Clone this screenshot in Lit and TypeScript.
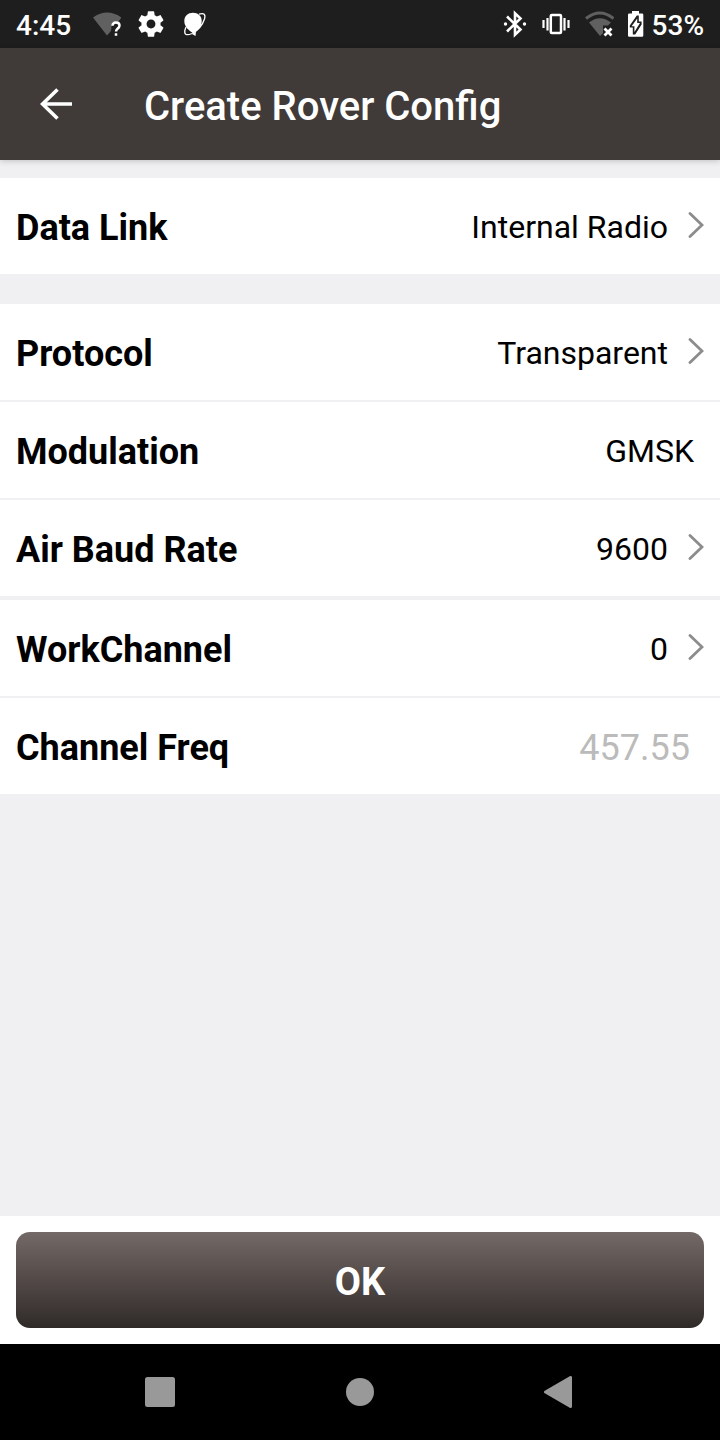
import { LitElement, html, css, svg, nothing } from "lit";
import { customElement, state } from "lit/decorators.js";

interface Setting {
  label: string;
  value: string;
  link: boolean;
}

const protocolSettings: Setting[] = [
  { label: "Protocol", value: "Transparent", link: true },
  { label: "Modulation", value: "GMSK", link: false },
  { label: "Air Baud Rate", value: "9600", link: true },
];

@customElement("status-bar")
export class StatusBar extends LitElement {
  static styles = css`
    :host {
      display: flex;
      justify-content: space-between;
      align-items: center;
      height: 48px;
      padding: 0 16px;
      background: #1e1e1e;
      color: #fff;
      font-size: 28px;
      line-height: 32px;
      font-weight: 500;
    }
    .group {
      display: flex;
      align-items: center;
      gap: 16px;
    }
    .group.system {
      gap: 14px;
    }
    .time {
      padding: 4px 6px 0 0;
    }
    .battery {
      display: flex;
      align-items: center;
      gap: 8px;
    }
    .percent {
      padding-top: 4px;
    }
    svg {
      display: block;
      flex: none;
    }
  `;

  render() {
    return html`
      <div class="group">
        <span class="time">4:45</span>
        <svg width="28" height="28" viewBox="0 0 28 28" aria-hidden="true">
          <path d="M0 7.5Q14-2.5 28.5 7.5L25 12H19L18 21L14 25.500Z" fill="#606060" />
          <path d="M19.500 15.800Q19.500 12.500 23 12.500T26.500 15.500C26.500 18.500 23 18.500 23 21.500M23 23.200V25.800" fill="none" stroke="#fff" stroke-width="2.500" />
        </svg>
        <svg width="28" height="28" viewBox="1 1 22 22" aria-hidden="true">
          <path fill="#fff" d="M19.430 12.980c.04-.32.07-.64.07-.98s-.03-.66-.07-.98l2.110-1.650c.19-.15.24-.42.12-.64l-2-3.460c-.12-.22-.39-.3-.61-.22l-2.490 1c-.52-.4-1.080-.73-1.690-.98l-.38-2.650C14.460 2.180 14.250 2 14 2h-4c-.25 0-.46.18-.49.42l-.38 2.650c-.61.25-1.170.59-1.690.98l-2.490-1c-.23-.09-.49 0-.61.22l-2 3.460c-.13.22-.07.49.12.64l2.110 1.650c-.04.32-.07.65-.07.98s.03.66.07.98l-2.110 1.650c-.19.15-.24.42-.12.64l2 3.460c.12.22.39.3.61.22l2.490-1c.52.4 1.080.73 1.690.98l.38 2.650c.03.24.24.42.49.42h4c.25 0 .46-.18.49-.42l.38-2.650c.61-.25 1.170-.59 1.690-.98l2.490 1c.23.09.49 0 .61-.22l2-3.460c.12-.22.07-.49-.12-.64l-2.110-1.650zM12 15.500c-1.930 0-3.500-1.570-3.500-3.500s1.570-3.500 3.500-3.500 3.500 1.570 3.500 3.500-1.570 3.500-3.500 3.500z" />
        </svg>
        <svg width="28" height="28" viewBox="0 0 28 28" aria-hidden="true">
          <path fill="#fff" d="M3.300 11C3.300 6 7 2.800 12 2.800S20.700 6 20.700 11C20.700 16.500 17 20 12.500 23.500C8 20.500 3.300 17 3.300 11Z" />
          <path fill="none" stroke="#fff" stroke-width="1.300" d="M18 4.200Q25.500 2 23.500 9C21.500 15 17 20.500 11 23.500Q3 27 3.800 20.500L5 17" />
          <path fill="#fff" d="M11 24L15 21.500L14.500 26Z" />
        </svg>
      </div>
      <div class="group system">
        <svg width="28" height="28" viewBox="0 0 28 28" aria-hidden="true">
          <path fill="none" stroke="#fff" stroke-width="2.600" d="M7 6.500L20.500 19.500L15 24.800V3.200L20.500 8.500L7 21.500" />
          <circle cx="5.500" cy="14" r="1.700" fill="#fff" />
          <circle cx="24.500" cy="14" r="1.700" fill="#fff" />
        </svg>
        <svg width="28" height="28" viewBox="0 0 28 28" aria-hidden="true">
          <rect x="8.800" y="5" width="10.200" height="18" rx="1" fill="none" stroke="#fff" stroke-width="2.500" />
          <path stroke="#fff" stroke-width="2.200" d="M1.500 10V18M5.500 8V20.500M22.500 8V20.500M26.500 10V18" />
        </svg>
        <svg width="30" height="28" viewBox="0 0 30 28" aria-hidden="true">
          <path fill="none" stroke="#606060" stroke-width="3" d="M2 8.500Q16-2.500 29.500 8.500" />
          <path fill="#606060" d="M5 12.500Q16 4 27 12.500L24 15.500H19V23L16 26Z" />
          <path stroke="#fff" stroke-width="2.800" d="M20.500 18.500L27.500 25.500M27.500 18.500L20.500 25.500" />
        </svg>
        <span class="battery">
          <svg width="16" height="28" viewBox="0 0 16 28" aria-hidden="true">
            <path fill="#fff" d="M4 1H11V3.500H14Q15.300 3.500 15.300 4.800V25.500Q15.300 26.800 14 26.800H1.300Q0 26.800 0 25.500V4.800Q0 3.500 1.300 3.500H4Z" />
            <path fill="#1e1e1e" d="M8.800 5.500H10.800V11.500H13.600V14.500L7.200 24.500H4.800V17.500H1.800V15.500Z" />
            <path fill="#fff" d="M9.200 8.500V13H12L6.400 22V16.300H3.600Z" />
          </svg>
          <span class="percent">53%</span>
        </span>
      </div>
    `;
  }
}

@customElement("nav-bar")
export class NavBar extends LitElement {
  static styles = css`
    :host {
      display: flex;
      justify-content: center;
      height: 96px;
      padding: 0 60px;
      background: #000;
    }
    .key {
      flex: 1;
      display: flex;
      align-items: center;
      justify-content: center;
      padding: 0;
      border: 0;
      background: none;
    }
  `;

  render() {
    return html`
      <button class="key" aria-label="Recent apps">
        <svg width="32" height="32" viewBox="0 0 32 32"><rect x="1" y="1" width="30" height="30" rx="2.500" fill="#999" /></svg>
      </button>
      <button class="key" aria-label="Home">
        <svg width="32" height="32" viewBox="0 0 32 32"><circle cx="16" cy="16" r="14" fill="#999" /></svg>
      </button>
      <button class="key" aria-label="Back">
        <svg width="32" height="32" viewBox="0 0 32 32"><path d="M1.500 16L26.500 1.500V30.500Z" fill="#999" stroke="#999" stroke-width="3" stroke-linejoin="round" /></svg>
      </button>
    `;
  }
}

@customElement("app-root")
export class AppRoot extends LitElement {
  static styles = css`
    :host {
      display: flex;
      flex-direction: column;
      min-height: 100vh;
      background: #f0f0f3;
      color: #000;
      font-family: Roboto, "Noto Sans", sans-serif;
    }
    .toolbar {
      display: flex;
      align-items: center;
      height: 112px;
      background: #403a38;
      color: #fff;
      box-shadow: 0 1px 6px rgba(0, 0, 0, 0.2);
    }
    .back {
      display: flex;
      align-items: center;
      justify-content: center;
      width: 112px;
      height: 112px;
      padding: 0;
      border: 0;
      background: none;
      color: inherit;
    }
    .title {
      margin: 0;
      padding: 6px 0 0 32px;
      font-size: 40px;
      line-height: 48px;
      font-weight: 500;
    }
    .settings {
      flex: 1;
      padding-top: 18px;
    }
    .section {
      display: flex;
      flex-direction: column;
      gap: 2px;
    }
    .section.spaced {
      margin-top: 30px;
    }
    .section.joined {
      margin-top: 4px;
    }
    .row {
      box-sizing: border-box;
      display: flex;
      align-items: center;
      justify-content: space-between;
      gap: 20px;
      width: 100%;
      height: 96px;
      padding: 0 16px;
      border: 0;
      background: #fff;
      color: inherit;
      font: inherit;
      text-align: left;
    }
    .label {
      padding-top: 4px;
      font-size: 36px;
      line-height: 44px;
      font-weight: 700;
    }
    .value {
      display: flex;
      align-items: center;
      gap: 20px;
      font-size: 32px;
      line-height: 40px;
    }
    .text {
      padding-top: 2px;
    }
    .row.plain .value {
      padding-right: 10px;
    }
    .chevron {
      display: block;
      padding-bottom: 2px;
    }
    .field {
      flex: 1;
      min-width: 0;
      height: 48px;
      padding: 4px 14px 0 0;
      border: 0;
      background: none;
      color: #bbb;
      font: inherit;
      font-size: 36px;
      line-height: 44px;
      text-align: right;
    }
    .footer {
      padding: 16px;
      background: #fff;
    }
    .ok {
      display: block;
      width: 100%;
      height: 96px;
      padding: 4px 0 0;
      border: 0;
      border-radius: 14px;
      background: linear-gradient(#736a68, #564d4b 45%, #2f2a28);
      color: #fff;
      font: inherit;
      font-size: 38px;
      font-weight: 700;
    }
  `;

  @state() private frequency = "457.55";

  private row({ label, value, link }: Setting) {
    const content = html`
      <span class="label">${label}</span>
      <span class="value">
        <span class="text">${value}</span>
        ${link
          ? html`<svg class="chevron" width="16" height="26" viewBox="0 0 16 26" aria-hidden="true">
              ${svg`<path d="M2 1.500L14 13L2 24.500" fill="none" stroke="#8c8c8c" stroke-width="2.800" stroke-linecap="round" />`}
            </svg>`
          : nothing}
      </span>
    `;
    return link
      ? html`<button class="row">${content}</button>`
      : html`<div class="row plain">${content}</div>`;
  }

  render() {
    return html`
      <status-bar></status-bar>
      <header class="toolbar">
        <button class="back" aria-label="Back">
          <svg width="32" height="32" viewBox="0 0 32 32">
            <path d="M32 16H2.500M17.500 1.500L2.500 16L17.500 30.500" fill="none" stroke="#fff" stroke-width="3.600" />
          </svg>
        </button>
        <h1 class="title">Create Rover Config</h1>
      </header>
      <main class="settings">
        <div class="section">
          ${this.row({ label: "Data Link", value: "Internal Radio", link: true })}
        </div>
        <div class="section spaced">${protocolSettings.map((s) => this.row(s))}</div>
        <div class="section joined">
          ${this.row({ label: "WorkChannel", value: "0", link: true })}
          <div class="row">
            <label class="label" for="frequency">Channel Freq</label>
            <input class="field" id="frequency" .value=${this.frequency} disabled />
          </div>
        </div>
      </main>
      <footer class="footer"><button class="ok">OK</button></footer>
      <nav-bar></nav-bar>
    `;
  }
}
